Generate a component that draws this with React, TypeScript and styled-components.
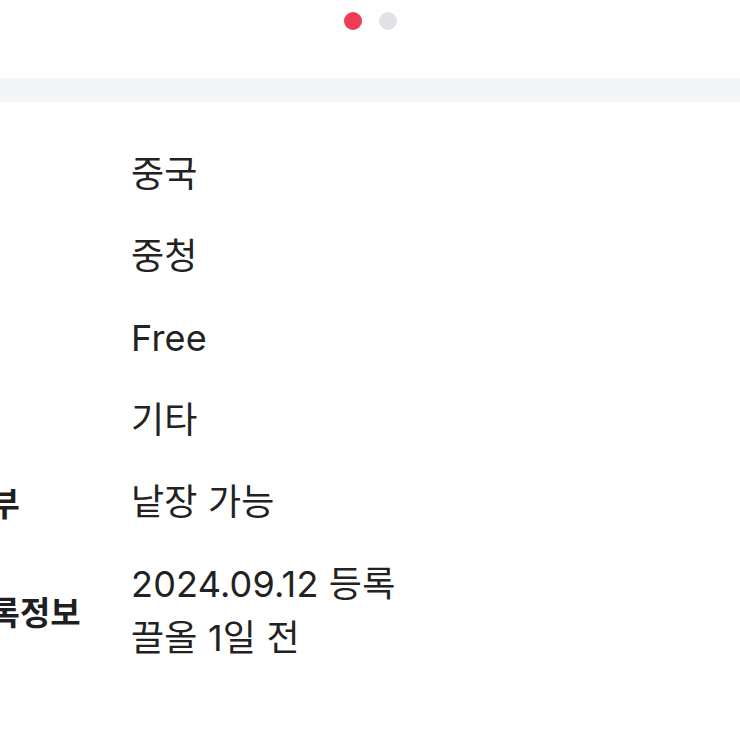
import styled, { createGlobalStyle } from "styled-components"

const GlobalStyle = createGlobalStyle`
    html, body {
        margin: 0;
        padding: 0;
        background: #ffffff;
        overflow: hidden;
    }
`

const Page = styled.div`
    width: 740px;
    height: 740px;
    font-family: Inter, "Noto Sans CJK KR", sans-serif;
    color: #222222;
`

const DotsBar = styled.div`
    display: flex;
    justify-content: center;
    gap: 17px;
    padding-top: 12px;
    height: 66px;
`

const Dot = styled.span<{ $active?: boolean }>`
    width: 18px;
    height: 18px;
    border-radius: 50%;
    background: ${(p) => (p.$active ? "#ee3b58" : "#e1e2e6")};
`

const Divider = styled.div`
    height: 24px;
    background: #f4f5f8;
`

const InfoList = styled.dl`
    display: grid;
    row-gap: 28px;
    margin: 0 0 0 -109px;
    padding: 45px 0 0 0;
`

const InfoRow = styled.div`
    display: grid;
    grid-template-columns: 240px 1fr;
    align-items: center;
`

const Label = styled.dt`
    font-family: "Noto Sans CJK KR", sans-serif;
    font-size: 33px;
    font-weight: 700;
    white-space: nowrap;
    color: #1f1f1f;
`

const Value = styled.dd`
    margin: 0;
    font-size: 36px;
    line-height: 54px;
    font-weight: 400;
    letter-spacing: 0.2px;
    color: #222222;
`

const rows = [
    { label: "원산지", value: ["중국"] },
    { label: "제조사", value: ["중청"] },
    { label: "사이즈", value: ["Free"] },
    { label: "분류", value: ["기타"] },
    { label: "낱장 여부", value: ["낱장 가능"] },
    { label: "상품 등록정보", value: ["2024.09.12 등록", "끌올 1일 전"] },
]

export default function App() {
    return (
        <>
            <GlobalStyle />
            <Page>
                <DotsBar>
                    <Dot $active />
                    <Dot />
                </DotsBar>
                <Divider />
                <InfoList>
                    {rows.map((row) => (
                        <InfoRow key={row.label}>
                            <Label>{row.label}</Label>
                            <Value>
                                {row.value.map((line) => (
                                    <div key={line}>{line}</div>
                                ))}
                            </Value>
                        </InfoRow>
                    ))}
                </InfoList>
            </Page>
        </>
    )
}
